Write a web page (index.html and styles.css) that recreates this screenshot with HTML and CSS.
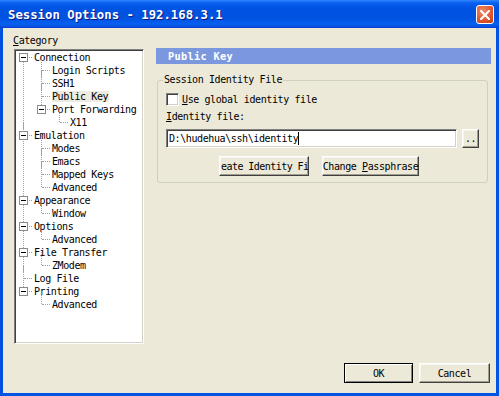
FILE: index.html
```html
<!DOCTYPE html>
<html>
<head>
<meta charset="utf-8">
<link rel="stylesheet" href="styles.css">
</head>
<body>
<div class="window">
  <div class="titlebar">
    <span class="title">Session Options - 192.168.3.1</span>
    <span class="close"><svg width="10" height="10" viewBox="0 0 10 10"><path d="M1 1 L9 9 M9 1 L1 9" stroke="#fff" stroke-width="2.2" stroke-linecap="square"/></svg></span>
  </div>
  <div class="frame">
    <div class="main">
      <div class="leftcol">
        <div class="cat-label"><u>C</u>ategory</div>
        <div class="tree">
          <div class="node"><div class="row"><span class="exp"></span><span class="lbl">Connection</span></div>
            <div class="children">
              <div class="node"><div class="row"><span class="lbl">Login Scripts</span></div></div>
              <div class="node"><div class="row"><span class="lbl">SSH1</span></div></div>
              <div class="node"><div class="row"><span class="lbl sel">Public Key</span></div></div>
              <div class="node"><div class="row"><span class="exp"></span><span class="lbl">Port Forwarding</span></div>
                <div class="children">
                  <div class="node"><div class="row"><span class="lbl">X11</span></div></div>
                </div>
              </div>
            </div>
          </div>
          <div class="node"><div class="row"><span class="exp"></span><span class="lbl">Emulation</span></div>
            <div class="children">
              <div class="node"><div class="row"><span class="lbl">Modes</span></div></div>
              <div class="node"><div class="row"><span class="lbl">Emacs</span></div></div>
              <div class="node"><div class="row"><span class="lbl">Mapped Keys</span></div></div>
              <div class="node"><div class="row"><span class="lbl">Advanced</span></div></div>
            </div>
          </div>
          <div class="node"><div class="row"><span class="exp"></span><span class="lbl">Appearance</span></div>
            <div class="children">
              <div class="node"><div class="row"><span class="lbl">Window</span></div></div>
            </div>
          </div>
          <div class="node"><div class="row"><span class="exp"></span><span class="lbl">Options</span></div>
            <div class="children">
              <div class="node"><div class="row"><span class="lbl">Advanced</span></div></div>
            </div>
          </div>
          <div class="node"><div class="row"><span class="exp"></span><span class="lbl">File Transfer</span></div>
            <div class="children">
              <div class="node"><div class="row"><span class="lbl">ZModem</span></div></div>
            </div>
          </div>
          <div class="node"><div class="row"><span class="lbl">Log File</span></div></div>
          <div class="node"><div class="row"><span class="exp"></span><span class="lbl">Printing</span></div>
            <div class="children">
              <div class="node"><div class="row"><span class="lbl">Advanced</span></div></div>
            </div>
          </div>
        </div>
      </div>
      <div class="rightcol">
        <div class="header">Public Key</div>
        <fieldset class="group">
          <legend>Session Identity File</legend>
          <div class="check-row"><span class="checkbox"></span><span><u>U</u>se global identity file</span></div>
          <div class="field-label"><u>I</u>dentity file:</div>
          <div class="field-row">
            <div class="textfield"><span>D:\hudehua\ssh\identity</span><span class="caret"></span></div>
            <div class="btn dots">..</div>
          </div>
          <div class="btn-row">
            <div class="btn create"><span>eate Identity Fi</span></div>
            <div class="btn change"><span>Change <u>P</u>assphrase</span></div>
          </div>
        </fieldset>
      </div>
    </div>
    <div class="footer">
      <div class="btn ok">OK</div>
      <div class="btn cancel">Cancel</div>
    </div>
  </div>
</div>
</body>
</html>
```

FILE: styles.css
```css
* { box-sizing: border-box; }
html, body { margin: 0; padding: 0; background: #ECE9D8; }
body {
  font-family: "DejaVu Sans Mono", "Liberation Mono", monospace;
  font-size: 10px;
  letter-spacing: -0.4px;
  color: #000;
}
.window {
  width: 499px;
  height: 396px;
  display: flex;
  flex-direction: column;
}
.titlebar {
  height: 28px;
  flex: none;
  display: flex;
  align-items: center;
  justify-content: space-between;
  padding: 0 5px 0 8px;
  background: linear-gradient(#2E86FF 0px, #0A5FF0 3px, #0054E3 8px, #0052E0 18px, #0660F0 24px, #0a4fd8 27px, #0831D9 28px);
}
.title {
  color: #fff;
  font-weight: bold;
  font-size: 12.3px;
  letter-spacing: 0;
  text-shadow: 1px 1px #0A1883;
  margin-top: 1px;
}
.close {
  width: 18px;
  height: 19px;
  margin-top: 1px;
  border: 1px solid #fff;
  border-radius: 3px;
  background: radial-gradient(circle at 35% 30%, #EE8A68 0%, #E0582F 55%, #C23B18 100%);
  display: flex;
  align-items: center;
  justify-content: center;
}
.frame {
  flex: 1;
  display: flex;
  flex-direction: column;
  background: #ECE9D8;
  border: 3px solid #0054E3;
  border-top: none;
  border-left-color: #0350E0;
}
.main {
  display: flex;
  gap: 12px;
  padding: 5px 11px 0 10px;
}
.leftcol {
  width: 131px;
  flex: none;
}
.cat-label {
  height: 16px;
  line-height: 15px;
}
.tree {
  margin-left: 1px;
  width: 130px;
  height: 295px;
  background: #fff;
  border: 1px solid;
  border-color: #808080 #fff #fff #808080;
  box-shadow: inset 1px 1px #404040, inset -1px -1px #D4D0C8;
  padding: 1px 0 0 1px;
  overflow: hidden;
}
.node { position: relative; }
.node::before {
  content: "";
  position: absolute;
  left: 7px;
  top: -7px;
  bottom: 0;
  border-left: 1px dotted #A0A0A0;
}
.node:last-child::before { bottom: auto; height: 13px; }
.tree > .node:first-child::before { top: 6px; }
.children { padding-left: 18px; }
.row {
  position: relative;
  height: 13px;
  line-height: 13px;
  padding-left: 18px;
  white-space: nowrap;
}
.row::before {
  content: "";
  position: absolute;
  left: 8px;
  top: 6px;
  width: 8px;
  border-top: 1px dotted #A0A0A0;
}
.exp {
  position: absolute;
  left: 3px;
  top: 2px;
  width: 9px;
  height: 9px;
  border: 1px solid #8A8A8A;
  background: #fff;
  z-index: 1;
}
.exp::after {
  content: "";
  position: absolute;
  left: 1px;
  top: 3px;
  width: 5px;
  height: 1px;
  background: #000;
}
.lbl { padding: 0 1px 0 0; }
.lbl.sel { background: #EEEBE0; }
.rightcol {
  flex: 1;
  padding-top: 15px;
}
.header {
  height: 16px;
  line-height: 16px;
  background: #7B98DE;
  color: #fff;
  font-weight: bold;
  font-size: 10.3px;
  letter-spacing: 0.3px;
  padding-left: 12px;
}
.group {
  margin: 10px 3px 0 1px;
  padding: 6px 8px 6px 8px;
  border: 1px solid #D0D0BF;
  border-radius: 3px;
  min-width: 0;
}
.group legend {
  padding: 0 1px 0 1px;
  margin-left: -3px;
  line-height: 12px;
}
.check-row {
  height: 14px;
  display: flex;
  align-items: center;
  gap: 3px;
}
.checkbox {
  width: 13px;
  height: 13px;
  background: #fff;
  border: 1px solid;
  border-color: #808080 #fff #fff #808080;
  box-shadow: inset 1px 1px #404040, inset -1px -1px #D4D0C8;
}
.field-label {
  margin-top: 4px;
  height: 14px;
  line-height: 14px;
}
.field-row {
  margin-top: 5px;
  display: flex;
  gap: 5px;
}
.textfield {
  width: 291px;
  height: 19px;
  background: #fff;
  border: 1px solid;
  border-color: #808080 #fff #fff #808080;
  box-shadow: inset 1px 1px #404040, inset -1px -1px #D4D0C8;
  padding-left: 2px;
  white-space: nowrap;
  display: flex;
  align-items: center;
}
.caret {
  display: inline-block;
  width: 1px;
  height: 13px;
  background: #000;
}
.btn {
  height: 20px;
  background: #ECE9D8;
  border: 1px solid;
  border-color: #fff #404040 #404040 #fff;
  box-shadow: inset -1px -1px #A09D8E, inset 1px 1px #F5F4EE;
  display: flex;
  align-items: center;
  justify-content: center;
  white-space: nowrap;
}
.dots {
  width: 17px;
  height: 19px;
  align-items: flex-end;
  padding-bottom: 3px;
}
.btn-row {
  margin-top: 8px;
  display: flex;
  gap: 13px;
  padding-left: 53px;
}
.create {
  width: 90px;
  justify-content: flex-start;
  padding-left: 1px;
  letter-spacing: -0.55px;
  overflow: hidden;
}
.change { width: 97px; }
.footer {
  margin-top: auto;
  display: flex;
  justify-content: flex-end;
  gap: 6px;
  padding: 0 6px 10px 0;
}
.ok {
  width: 69px;
  border-color: #000;
  box-shadow: inset 1px 1px #fff, inset -1px -1px #808080;
}
.cancel { width: 71px; }
```
